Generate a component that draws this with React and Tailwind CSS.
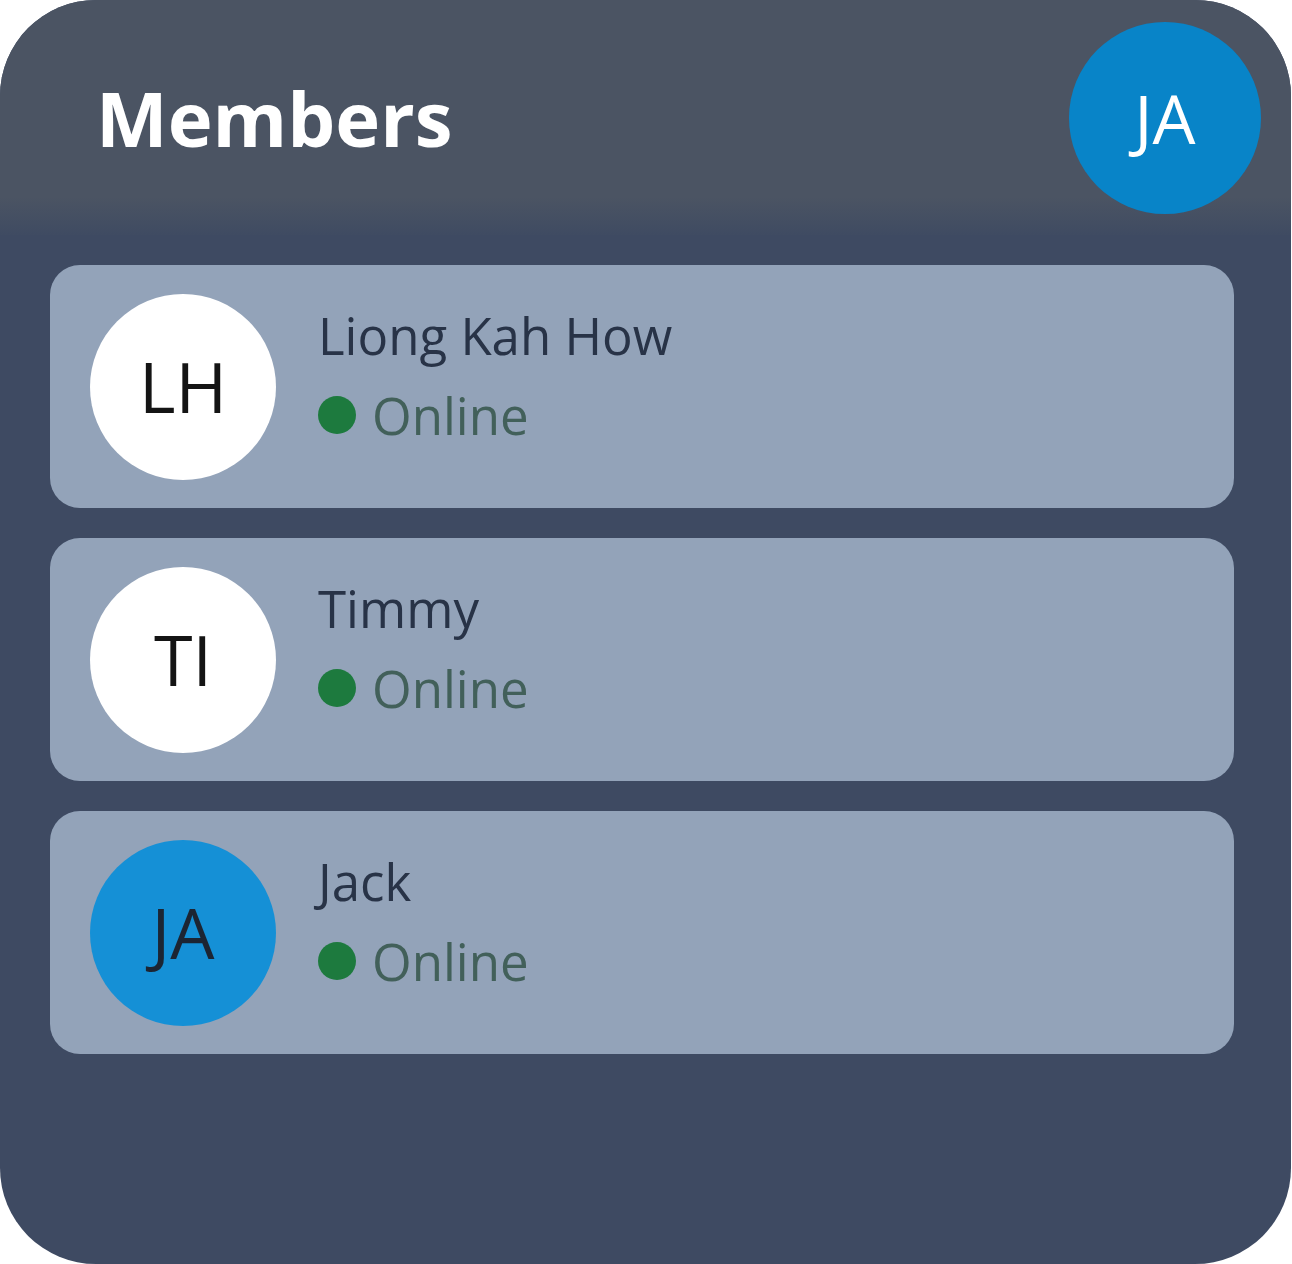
import React from "react";

const members = [
  { initials: "LH", name: "Liong Kah How", status: "Online", self: false },
  { initials: "TI", name: "Timmy", status: "Online", self: false },
  { initials: "JA", name: "Jack", status: "Online", self: true },
];

function MemberRow({ m }) {
  return (
    <div className="flex h-[243px] items-center rounded-[30px] bg-[#93a3b9] pl-[40px]">
      <div
        className={
          m.self
            ? "flex h-[186px] w-[186px] shrink-0 items-center justify-center rounded-full bg-[#1590d6] text-[70px] text-[#1c2533]"
            : "flex h-[186px] w-[186px] shrink-0 items-center justify-center rounded-full bg-white text-[70px] text-[#141414]"
        }
      >
        {m.initials}
      </div>
      <div className="ml-[42px] -mt-[24px] flex flex-col">
        <span className="text-[51px] leading-[80px] text-[#283347]">{m.name}</span>
        <span className="flex items-center text-[51px] leading-[80px] text-[#42605a]">
          <span className="mr-[16px] h-[38px] w-[38px] rounded-full bg-[#1d7a3e]" />
          {m.status}
        </span>
      </div>
    </div>
  );
}

export default function App() {
  return (
    <div className="min-h-screen bg-white" style={{ fontFamily: '"Open Sans", "Noto Sans", sans-serif' }}>
      <div className="h-[1264px] w-[1291px] overflow-hidden rounded-[96px] bg-[#3e4a62]">
        {/* Header */}
        <div className="flex h-[235px] items-center justify-between bg-[linear-gradient(to_bottom,#4b5463_84%,#3f4b62_100%)] pl-[96px] pr-[30px]">
          <h1 className="text-[76px] font-bold leading-none text-white">Members</h1>
          <div className="flex h-[192px] w-[192px] items-center justify-center rounded-full bg-[#0884c8] text-[68px] text-white">
            JA
          </div>
        </div>

        {/* Member list */}
        <div className="flex flex-col gap-[30px] pl-[50px] pr-[57px] pt-[30px]">
          {members.map((m) => (
            <MemberRow key={m.initials} m={m} />
          ))}
        </div>
      </div>
    </div>
  );
}
